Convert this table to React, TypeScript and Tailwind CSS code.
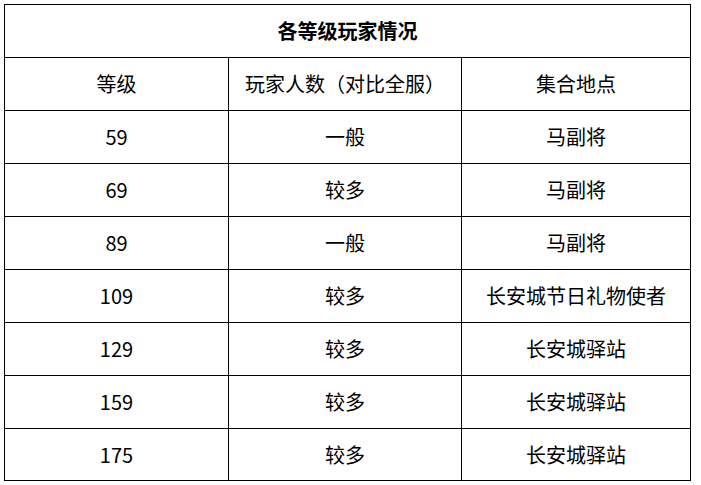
import React from "react";

type Row = { level: string; players: string; place: string };

const rows: Row[] = [
  { level: "59", players: "一般", place: "马副将" },
  { level: "69", players: "较多", place: "马副将" },
  { level: "89", players: "一般", place: "马副将" },
  { level: "109", players: "较多", place: "长安城节日礼物使者" },
  { level: "129", players: "较多", place: "长安城驿站" },
  { level: "159", players: "较多", place: "长安城驿站" },
  { level: "175", players: "较多", place: "长安城驿站" },
];

const cell =
  "flex items-center justify-center border-r border-b border-black h-[53px]";

export default function App() {
  return (
    <div
      className="w-[701px] h-[485px] bg-white text-black text-[20px] pt-[4px] pl-[4px]"
      style={{ fontFamily: '"Noto Sans CJK SC", "Noto Sans", sans-serif' }}
    >
      <div className="grid grid-cols-[224px_233px_229px] w-fit border-l border-t border-black">
        <div className={`${cell} col-span-3 font-bold`}>各等级玩家情况</div>
        <div className={cell}>等级</div>
        <div className={cell}>玩家人数（对比全服）</div>
        <div className={cell}>集合地点</div>
        {rows.map((r, i) => (
          <React.Fragment key={r.level}>
            <div className={`${cell} ${i === rows.length - 1 ? "!h-[52px]" : ""}`}>
              {r.level}
            </div>
            <div className={`${cell} ${i === rows.length - 1 ? "!h-[52px]" : ""}`}>
              {r.players}
            </div>
            <div className={`${cell} ${i === rows.length - 1 ? "!h-[52px]" : ""}`}>
              {r.place}
            </div>
          </React.Fragment>
        ))}
      </div>
    </div>
  );
}
